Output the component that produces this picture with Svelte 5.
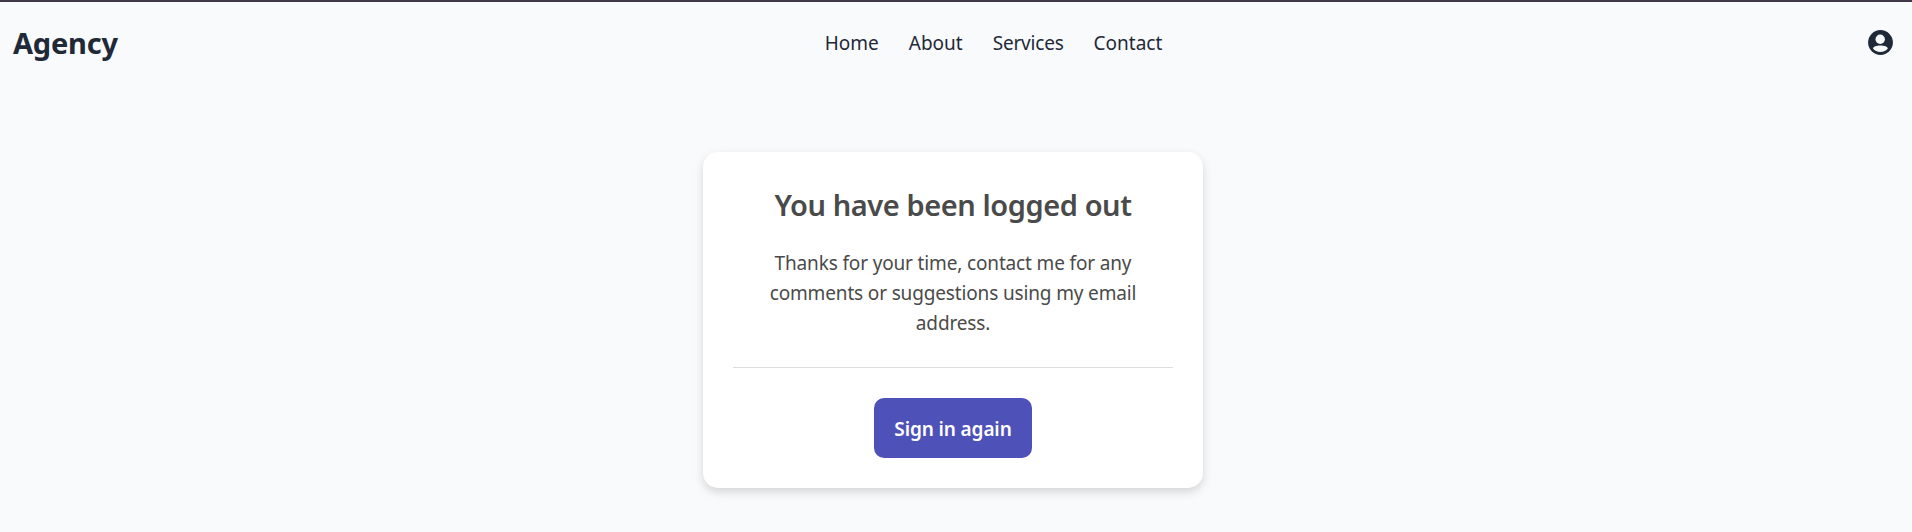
<script>
  const links = ['Home', 'About', 'Services', 'Contact'];
</script>

<div class="page">
  <header>
    <a class="brand" href="#home">Agency</a>
    <nav>
      {#each links as link}
        <a class:tight={link === 'Services'} href="#{link.toLowerCase()}">{link}</a>
      {/each}
    </nav>
    <button class="account" aria-label="Account">
      <svg viewBox="0 0 25 25" width="25" height="25">
        <circle cx="12.500" cy="12.500" r="12.400" />
        <circle class="cut" cx="12.200" cy="9.300" r="4.700" />
        <path class="cut" d="M5 18.600c0-2 3.500-3.200 7.300-3.200s7.500 1.200 7.500 3.200c-1.500 2.200-4.300 3.500-7.400 3.500S6.500 20.800 5 18.600z" />
      </svg>
    </button>
  </header>
  <main>
    <section class="card">
      <h1>You have been logged out</h1>
      <p>Thanks for your time, contact me for any<br />comments or suggestions using my email<br />address.</p>
      <hr />
      <a class="signin" href="#signin">Sign in again</a>
    </section>
  </main>
</div>

<style>
  :global(body) {
    margin: 0;
    background: #f9fafc;
  }
  .page {
    box-sizing: border-box;
    height: 532px;
    overflow: hidden;
    border-top: 2px solid #42384a;
    background: #f9fafc;
    font-family: 'Segoe UI', 'Noto Sans', sans-serif;
    font-size: 19px;
    font-weight: 400;
    line-height: 30px;
  }
  a {
    color: inherit;
    text-decoration: none;
  }
  header {
    display: grid;
    grid-template-columns: 1fr auto 1fr;
    align-items: center;
    height: 81px;
    padding: 0 19px 0 13px;
    color: #1f2937;
  }
  .brand {
    font-size: 29px;
    font-weight: 700;
    letter-spacing: -0.2px;
    line-height: 45px;
  }
  nav {
    display: flex;
    gap: 30px;
    margin-left: 81px;
    padding-top: 1px;
  }
  .tight {
    letter-spacing: -0.2px;
  }
  .account {
    justify-self: end;
    display: block;
    width: 25px;
    height: 25px;
    padding: 0;
    border: 0;
    background: none;
  }
  svg {
    display: block;
    fill: #1f2937;
  }
  .cut {
    fill: #f9fafc;
  }
  main {
    display: flex;
    justify-content: center;
    padding: 69px 6px 0 0;
  }
  .card {
    box-sizing: border-box;
    width: 500px;
    height: 336px;
    padding: 30px;
    border-radius: 15px;
    background: #fff;
    box-shadow: 0 4px 10px rgba(0, 0, 0, 0.15);
    color: #4a4a4a;
    text-align: center;
  }
  h1 {
    margin: 0 0 21px;
    font-size: 29px;
    font-weight: 600;
    letter-spacing: -0.42px;
    line-height: 45px;
  }
  p {
    margin: 0 0 29px;
    letter-spacing: -0.15px;
    white-space: nowrap;
  }
  hr {
    height: 1px;
    margin: 0 0 30px;
    border: 0;
    background: #ddd;
  }
  .signin {
    display: block;
    box-sizing: border-box;
    width: 158px;
    height: 60px;
    margin: 0 auto;
    padding-top: 1px;
    border-radius: 10px;
    background: #4e51b8;
    color: #fff;
    font-weight: 600;
    letter-spacing: -0.12px;
    line-height: 60px;
  }
</style>
